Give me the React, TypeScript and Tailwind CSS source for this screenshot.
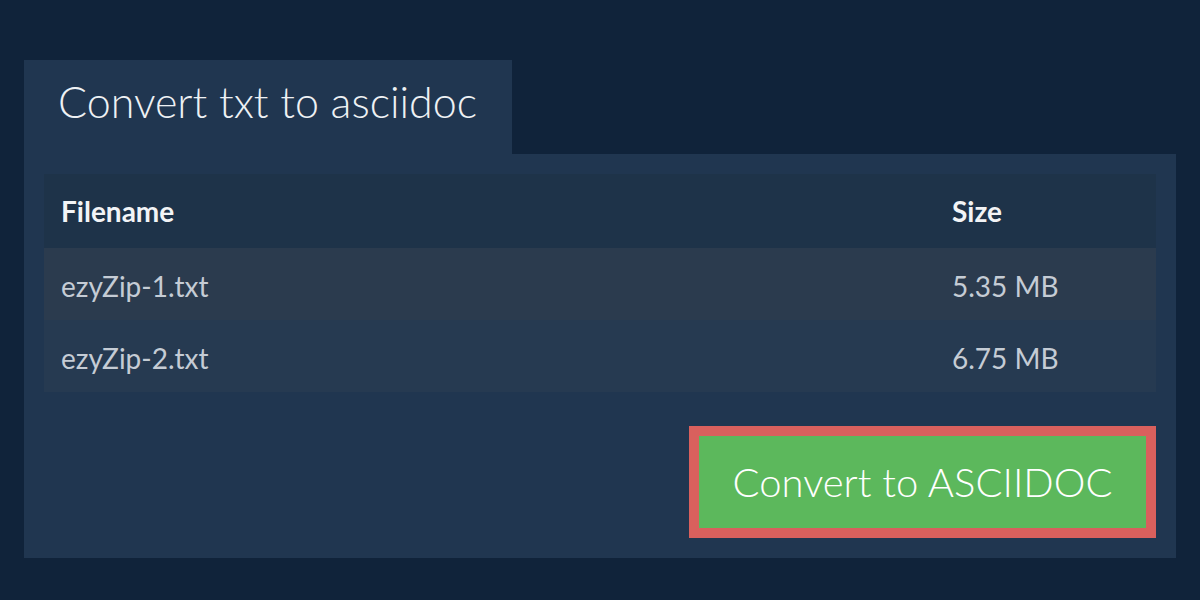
const files = [
  { name: "ezyZip-1.txt", size: "5.35 MB" },
  { name: "ezyZip-2.txt", size: "6.75 MB" },
];

export default function App() {
  return (
    <div className="w-[1200px] h-[600px] bg-[#10233a] px-6 pt-[60px] font-['Lato',sans-serif]">
      <div className="w-[488px] h-[94px] bg-[#203650] pl-[34px] pt-[20px]">
        <h1 className="text-[43px] font-light text-[#eef1f4] leading-none">Convert txt to asciidoc</h1>
      </div>
      <div className="bg-[#203650] p-5">
        <div className="w-full">
          <div className="grid grid-cols-[1fr_187px] h-[74px] items-center bg-[#1e3349] px-[17px] text-[28px] font-bold text-[#f2f4f6]">
            <span>Filename</span>
            <span>Size</span>
          </div>
          {files.map((f, i) => (
            <div
              key={f.name}
              className={`grid grid-cols-[1fr_187px] h-[72px] items-center px-[17px] pt-[3px] text-[28px] text-[#c5ccd5] ${
                i === 0 ? "bg-[#2b3b4e]" : "bg-[#263a51]"
              }`}
            >
              <span>{f.name}</span>
              <span>{f.size}</span>
            </div>
          ))}
        </div>
        <div className="flex justify-end mt-[33px] pt-px">
          <button className="w-[467px] h-[112px] border-[10px] border-[#d9605d] bg-[#5cb85c] text-[40px] font-light text-white leading-none">
            Convert to ASCIIDOC
          </button>
        </div>
      </div>
    </div>
  );
}
